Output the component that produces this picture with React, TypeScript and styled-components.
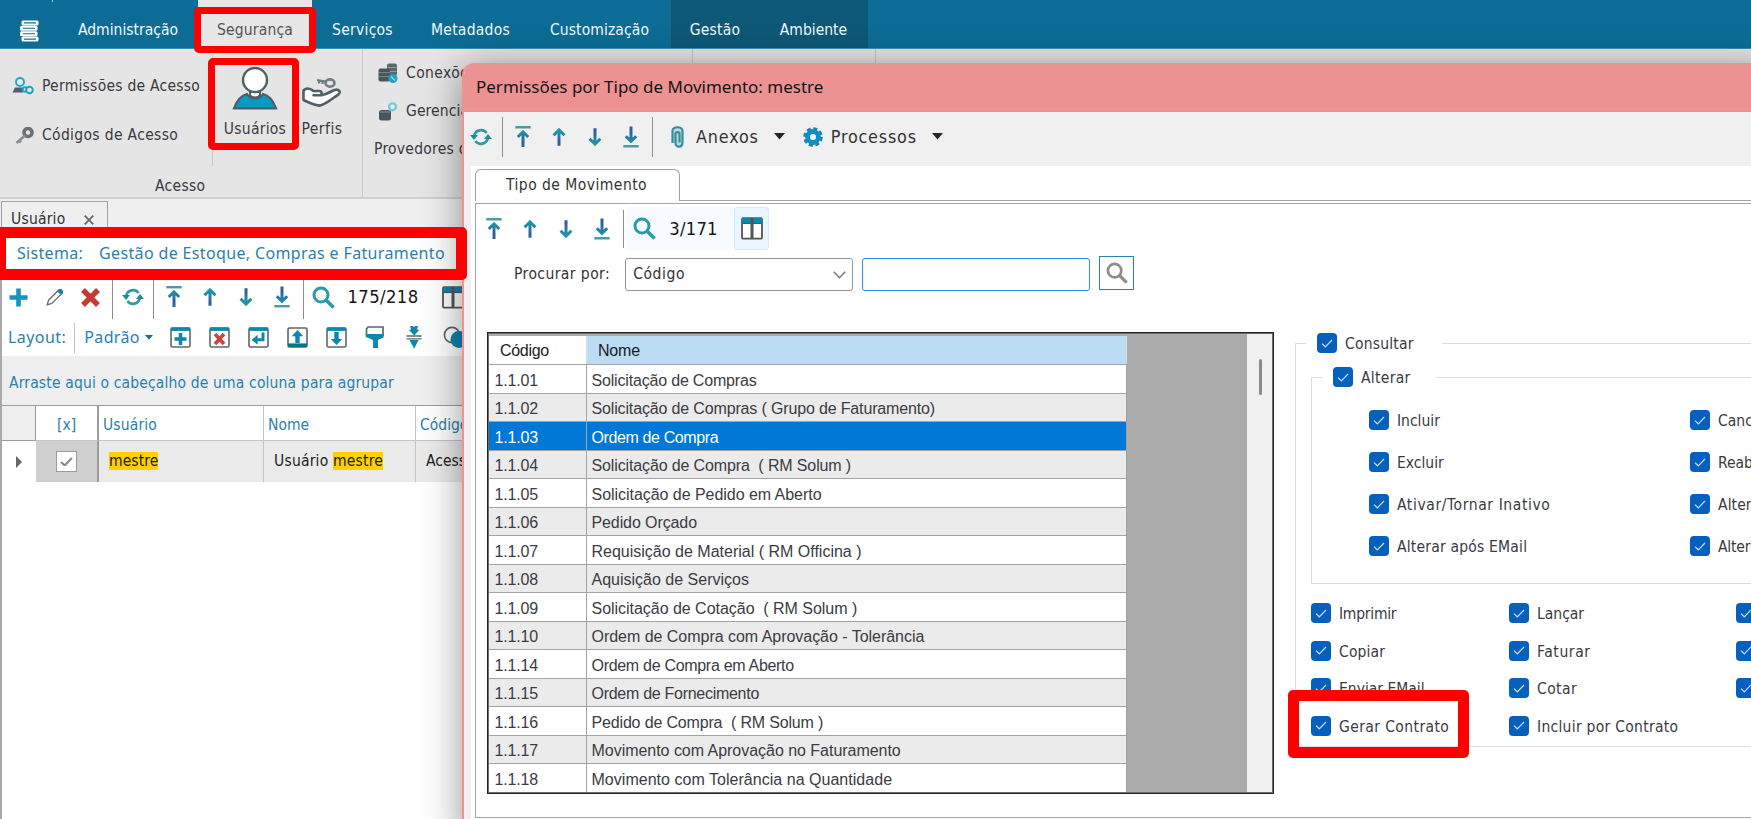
import React from 'react';
import styled, { createGlobalStyle, css } from 'styled-components';

const ui = '"DejaVu Sans Condensed", "DejaVu Sans", sans-serif';
const humanist = '"Noto Sans", "Open Sans", sans-serif';
const gridFont = '"Liberation Sans", Arial, sans-serif';

const teal = '#1c9aa8';
const navy = '#2f5f9e';
const brand = '#0f86ad';
const slate = '#4f5f66';

const Global = createGlobalStyle`
  * { box-sizing: border-box; }
  html, body { margin: 0; padding: 0; overflow: hidden; background: #fff; }
  body { font-family: ${ui}; font-size: 15.5px; color: #333; }
  svg { display: block; flex: none; }
`;

const Screen = styled.div`
  position: relative;
  width: 1751px;
  height: 819px;
  overflow: hidden;
  background: #fff;
`;

const Text = styled.span<{ $ls?: number; $size?: number; $color?: string; $font?: string }>`
  white-space: pre;
  flex: none;
  line-height: 1.2;
  letter-spacing: ${(p) => p.$ls ?? 0}px;
  ${(p) => p.$size && css`font-size: ${p.$size}px;`}
  ${(p) => p.$color && css`color: ${p.$color};`}
  ${(p) => p.$font && css`font-family: ${p.$font};`}
`;

/* ---------- menu bar ---------- */

const MenuBar = styled.nav`
  display: flex;
  height: 49px;
  background: #0c6c95;
  border-bottom: 1px solid #3d8fb3;
  color: #f2f7f9;
`;
const AppButton = styled.div`
  width: 58px;
  padding-left: 20px;
`;
const TopMark = styled.div`
  width: 1px;
  height: 2px;
  margin: 0 0 18px 32px;
  background: #a9cbdb;
`;
const MenuItem = styled.div<{ $w: number; $active?: boolean; $dark?: boolean }>`
  display: flex;
  flex: none;
  justify-content: center;
  align-items: center;
  width: ${(p) => p.$w}px;
  padding-top: 12px;
  background: ${(p) => (p.$active ? '#e6e6e6' : p.$dark ? '#0d5877' : 'transparent')};
  color: ${(p) => (p.$active ? '#555' : 'inherit')};
`;

/* ---------- ribbon ---------- */

const Ribbon = styled.section`
  display: flex;
  height: 150px;
  background: #e5e5e5;
  border-bottom: 2px solid #cfcfcf;
  color: #3a3a42;
`;
const RibbonGroup = styled.div<{ $w: number }>`
  flex: none;
  width: ${(p) => p.$w}px;
  border-right: 1px solid #c8c8c8;
`;
const RibbonBody = styled.div`
  display: flex;
  height: 117px;
`;
const RibbonCaption = styled.div`
  display: flex;
  align-items: center;
  height: 40px;
  padding-left: 155px;
`;
const RibbonList = styled.div`
  width: 212px;
  height: 117px;
  padding-top: 12px;
`;
const RibbonLink = styled.div<{ $h: number; $pl: number; $gap: number }>`
  display: flex;
  align-items: center;
  height: ${(p) => p.$h}px;
  padding-left: ${(p) => p.$pl}px;
  gap: ${(p) => p.$gap}px;
`;
const RibbonDivider = styled.div`
  width: 1px;
  height: 111px;
  margin-top: 6px;
  background: #c8c8c8;
`;
const BigButton = styled.div<{ $w: number; $ml: number }>`
  display: flex;
  flex-direction: column;
  align-items: center;
  width: ${(p) => p.$w}px;
  margin-left: ${(p) => p.$ml}px;
  padding-top: 17px;
  svg { margin-bottom: 10px; }
`;

/* ---------- document area ---------- */

const TabStrip = styled.div`
  height: 32px;
  padding: 2px 0 0 1px;
  background: #efefef;
`;
const DocTab = styled.div`
  display: flex;
  align-items: center;
  width: 107px;
  height: 36px;
  padding-left: 9px;
  gap: 19px;
  border: 1px solid #a0a0a0;
  border-bottom: 0;
`;
const Document = styled.main`
  width: 620px;
  height: 588px;
  background: #fff;
  border-left: 2px solid #a9a9a9;
`;
const SystemBar = styled.div`
  display: flex;
  align-items: center;
  height: 44px;
  padding: 2px 0 0 15px;
  gap: 16px;
  color: #2a7fae;
`;
const Tools = styled.div<{ $h: number; $pl?: number }>`
  display: flex;
  align-items: center;
  height: ${(p) => p.$h}px;
  padding-left: ${(p) => p.$pl ?? 0}px;
`;
const Tool = styled.div<{ $w: number; $bg?: string; $line?: string }>`
  display: flex;
  flex: none;
  justify-content: center;
  align-items: center;
  width: ${(p) => p.$w}px;
  ${(p) => p.$bg && css`align-self: stretch; border-radius: 3px; background: ${p.$bg};`}
  ${(p) => p.$line && css`border: 1px solid ${p.$line};`}
`;
const Separator = styled.div<{ $h: number; $color?: string }>`
  flex: none;
  width: 1px;
  height: ${(p) => p.$h}px;
  background: ${(p) => p.$color ?? '#8d8d8d'};
`;
const GroupPanel = styled.div`
  display: flex;
  align-items: center;
  height: 49px;
  padding: 5px 0 0 7px;
  background: #efefef;
  color: #2a7fae;
`;
const UserGrid = styled.div`
  display: grid;
  grid-template-columns: 34px 63px 165px 152px 1fr;
  grid-template-rows: 35px 41px;
  border-top: 1px solid #9c9c9c;
`;
const UserHead = styled.div<{ $bg?: string; $pl?: number }>`
  display: flex;
  align-items: center;
  padding: 4px 0 0 ${(p) => p.$pl ?? 4}px;
  color: #2a7fae;
  background: ${(p) => p.$bg ?? '#fff'};
  border-right: 1px solid #c4c4c4;
  border-bottom: 1px solid #c4c4c4;
  &:nth-child(1) { border-color: #9c9c9c; }
  &:nth-child(2) { border-right: 2px solid #9c9c9c; }
`;
const UserCell = styled.div<{ $bg?: string; $pl?: number }>`
  display: flex;
  align-items: center;
  padding-left: ${(p) => p.$pl ?? 10}px;
  color: #1d1d24;
  background: ${(p) => p.$bg ?? '#eaeaea'};
  border-right: 1px solid #c4c4c4;
  &:nth-child(6) { border-right: 0; }
  &:nth-child(7) { border-right: 2px solid #9c9c9c; }
`;
const Mark = styled.mark`
  background: #ffd000;
  color: inherit;
`;
const GrayCheck = styled.div`
  display: flex;
  align-items: center;
  justify-content: center;
  width: 21px;
  height: 21px;
  border: 1.5px solid #9a9a9a;
  background: #fff;
`;

/* ---------- dialog ---------- */

const Dialog = styled.section`
  position: absolute;
  left: 462px;
  top: 63px;
  width: 1310px;
  height: 780px;
  overflow: hidden;
  background: #f0f0f0;
  border: 2px solid #ee9393;
  border-radius: 12px 0 0 0;
  box-shadow: 0 6px 38px rgba(0, 0, 0, 0.42);
  border-top: 0;
`;
const TitleBar = styled.header`
  display: flex;
  align-items: center;
  height: 49px;
  padding: 1px 0 0 12px;
  background: #ec9292;
  border-bottom: 1px solid #c0a0a0;
  color: #141414;
`;
const Pages = styled.div`
  height: 654px;
  margin-left: 7px;
  padding: 3px 0 0 4px;
  background: #fff;
`;
const PageTabs = styled.div`
  display: flex;
  align-items: flex-end;
  height: 32px;
`;
const PageTab = styled.div`
  display: flex;
  align-items: center;
  width: 205px;
  height: 32px;
  padding-left: 30px;
  border: 1px solid #9f9f9f;
  border-bottom: 0;
  border-radius: 6px 6px 0 0;
`;
const PageTabsRest = styled.div`
  flex: 1;
  height: 1px;
  background: #a5a5a5;
`;
const Page = styled.div`
  height: 615px;
  margin-top: 2px;
  border: solid #a5a5a5;
  border-width: 1px 0 1px 1px;
`;
const SearchRow = styled.div`
  display: flex;
  align-items: center;
  height: 49px;
  padding-left: 38px;
`;
const Select = styled.div`
  display: flex;
  align-items: center;
  justify-content: space-between;
  width: 228px;
  height: 33px;
  margin-left: 15px;
  padding: 0 6px 0 7px;
  border: 1px solid #949494;
  border-radius: 3px;
  background: #fff;
`;
const Field = styled.input`
  width: 228px;
  height: 33px;
  margin-left: 9px;
  border: 1.5px solid #2f8fdc;
  border-radius: 3px;
  outline: 0;
  background: #fff;
`;
const SearchButton = styled.div`
  display: flex;
  align-items: center;
  justify-content: center;
  width: 35px;
  height: 34px;
  margin: -4px 0 0 9px;
  border: 1.5px solid #2b84aa;
`;
const Split = styled.div`
  display: flex;
  align-items: flex-start;
  padding: 33px 0 0 11px;
`;
const GridFrame = styled.div`
  display: flex;
  flex: none;
  width: 787px;
  height: 462px;
  padding: 1px 0 0 1px;
  border: 1px solid #222;
  outline: 1px solid #6c6c6c;
  outline-offset: -2px;
  background: #ababab;
  font-family: ${gridFont};
  font-size: 16px;
`;
const Table = styled.div`
  width: 638px;
  padding-top: 2px;
`;
const TableHead = styled.div`
  display: grid;
  grid-template-columns: 98px 1fr;
  height: 29px;
  border-bottom: 1px solid #a3a3a3;
  color: #1a1a22;
`;
const HeadCell = styled.div<{ $selected?: boolean }>`
  display: flex;
  align-items: center;
  padding: 1px 0 0 11px;
  background: ${(p) => (p.$selected ? '#bbdcf3' : '#fff')};
  border-right: 1px solid #dcdcdc;
`;
const TableRow = styled.div<{ $alt: boolean; $selected: boolean }>`
  display: grid;
  grid-template-columns: 98px 1fr;
  height: 28.5px;
  color: ${(p) => (p.$selected ? '#fff' : '#3b3b44')};
  background: ${(p) => (p.$selected ? '#0078d7' : p.$alt ? '#ebebeb' : '#fff')};
  border-bottom: 1px solid #a3a3a3;
`;
const Cell = styled.div<{ $pl: number }>`
  display: flex;
  align-items: center;
  padding: 3px 0 0 ${(p) => p.$pl}px;
  border-right: 1px solid #a3a3a3;
`;
const ScrollTrack = styled.div`
  width: 26px;
  height: 459px;
  margin-left: auto;
  padding: 25px 0 0 12px;
  background: #f0f0f0;
`;
const ScrollThumb = styled.div`
  width: 3px;
  height: 36px;
  border-radius: 2px;
  background: #8b8b8b;
`;

/* ---------- permissions ---------- */

const PermissionGroup = styled.fieldset<{ $outer?: boolean }>`
  flex: none;
  width: 700px;
  height: ${(p) => (p.$outer ? 414 : 217)}px;
  margin: ${(p) => (p.$outer ? '1px 0 0 21px' : '14px 0 0 15px')};
  padding: 0;
  min-width: 0;
  border: 1.5px solid #dedede;
`;
const Legend = styled.legend<{ $w: number }>`
  display: flex;
  width: ${(p) => p.$w}px;
  margin-left: 10px;
  padding: 0 0 0 11px;
`;
const CheckGrid = styled.div<{ $cols: string; $row: number; $pad: string }>`
  display: grid;
  grid-template-columns: ${(p) => p.$cols};
  grid-auto-rows: ${(p) => p.$row}px;
  padding: ${(p) => p.$pad};
`;
const CheckLabel = styled.div`
  display: flex;
  align-items: flex-start;
  gap: 8px;
  height: 20px;
  color: #3a3a42;
  span { line-height: 22px; }
`;
const CheckBox = styled.div`
  flex: none;
  display: flex;
  align-items: center;
  justify-content: center;
  width: 20px;
  height: 20px;
  border-radius: 4px;
  background: #0560bd;
`;

/* ---------- highlight frames ---------- */

const Highlight = styled.div<{ $x: number; $y: number; $w: number; $h: number; $b: number }>`
  position: absolute;
  left: ${(p) => p.$x}px;
  top: ${(p) => p.$y}px;
  width: ${(p) => p.$w}px;
  height: ${(p) => p.$h}px;
  border: ${(p) => p.$b}px solid #ff0000;
  border-radius: 5px;
`;

/* ---------- icons ---------- */

const Defs = styled.svg`
  position: absolute;
  width: 0;
  height: 0;
`;

const Gradients = () => (
  <Defs>
    <defs>
      <linearGradient id="rise" gradientUnits="userSpaceOnUse" x1="0" y1="3" x2="0" y2="21">
        <stop offset="0.1" stopColor={teal} />
        <stop offset="0.8" stopColor={navy} />
      </linearGradient>
      <linearGradient id="fall" gradientUnits="userSpaceOnUse" x1="0" y1="21" x2="0" y2="3">
        <stop offset="0.1" stopColor={teal} />
        <stop offset="0.8" stopColor={navy} />
      </linearGradient>
    </defs>
  </Defs>
);

const ArrowUp = () => (
  <svg width="24" height="24" viewBox="0 0 24 24" fill="none" stroke="url(#rise)" strokeWidth="3">
    <path d="M12 20.8V5M6.6 10.2L12 4.800l5.400 5.400" />
  </svg>
);
const ArrowDown = () => (
  <svg width="24" height="24" viewBox="0 0 24 24" fill="none" stroke="url(#fall)" strokeWidth="3">
    <path d="M12 3.200V19M6.600 13.800l5.400 5.400 5.400-5.400" />
  </svg>
);
const ArrowTop = () => (
  <svg width="24" height="24" viewBox="0 0 24 24" fill="none">
    <path d="M4.300 2.200h15.400" stroke="#4c9aa4" strokeWidth="2.400" />
    <path d="M12 22V8M6.800 12L12 6.800 17.200 12" stroke="url(#rise)" strokeWidth="3" />
  </svg>
);
const ArrowBottom = () => (
  <svg width="24" height="24" viewBox="0 0 24 24" fill="none">
    <path d="M4.300 21.200h15.400" stroke="#4c9aa4" strokeWidth="2.400" />
    <path d="M12 1.500V15M6.800 11.200L12 16.400l5.200-5.200" stroke="url(#fall)" strokeWidth="3" />
  </svg>
);
const Refresh = () => (
  <svg width="22" height="20" viewBox="0 0 22 20" fill="none">
    <path d="M4.200 8.600A7 7 0 0 1 16.600 6" stroke="#2f9aa5" strokeWidth="2.600" />
    <path d="M17.800 11.400A7 7 0 0 1 5.400 14" stroke="#2f9aa5" strokeWidth="2.600" />
    <path d="M0 8h8l-4 5z" fill="#1f8f96" />
    <path d="M22 12h-8l4-5z" fill="#1f8f96" />
  </svg>
);
const Magnifier = ({ size = 23, color = '#2a9aa8', width = 3 }) => (
  <svg width={size} height={size} viewBox="0 0 23 23" fill="none" stroke={color} strokeWidth={width}>
    <circle cx="9" cy="9" r="7" />
    <path d="M14 14l7.600 7.600" strokeWidth={width + 0.6} />
  </svg>
);
const Columns = () => (
  <svg width="22" height="23" viewBox="0 0 22 23">
    <rect x="1" y="1.200" width="20" height="20.400" rx="1" fill="#fff" stroke="#555" strokeWidth="1.800" />
    <rect x="1" y="1" width="20" height="5" fill="#0b86b5" />
    <path d="M11 1v21" stroke="#555" strokeWidth="3" />
    <path d="M1 6.500h20" stroke="#555" strokeWidth="1.200" />
  </svg>
);
const Plus = () => (
  <svg width="19" height="19" viewBox="0 0 19 19">
    <path d="M9.500 0.500v18M0.500 9.500h18" stroke="#1593c0" strokeWidth="4.600" />
  </svg>
);
const Pencil = () => (
  <svg width="18" height="18" viewBox="0 0 18 18">
    <path d="M1.200 16.800L2.600 12.200 12.400 2.200c1.600-1.600 5 1.600 3.400 3.400L5.800 15.400z" fill="#fff" stroke="#6a6a6a" strokeWidth="1.300" />
    <path d="M11.200 3.400L13.200 1.400c1.800-1.200 4.600 1.400 3.600 3.400l-2 2z" fill="#1d7fae" />
  </svg>
);
const Cross = ({ size = 19, color = '#c63a32', width = 5.4 }) => (
  <svg width={size} height={size} viewBox="0 0 19 19">
    <path d="M2 2l15 15M17 2L2 17" stroke={color} strokeWidth={width} />
  </svg>
);
const Caret = ({ w = 11, color = '#262626' }) => (
  <svg width={w} height={w * 0.6} viewBox="0 0 12 7">
    <path d="M0 0h12L6 7z" fill={color} />
  </svg>
);

const BoxIcon = ({ children }: { children: React.ReactNode }) => (
  <svg width="21" height="21" viewBox="0 0 21 21" fill="none">
    <rect x="1" y="1" width="19" height="19" rx="1.500" fill="#fff" stroke="#5a686c" strokeWidth="1.600" />
    <path d="M1 2.200h19" stroke={brand} strokeWidth="3.400" />
    {children}
  </svg>
);
const LayoutAdd = () => (
  <BoxIcon><path d="M10.500 6v12M4.500 12h12" stroke={brand} strokeWidth="3.600" /></BoxIcon>
);
const LayoutDelete = () => (
  <BoxIcon><path d="M6 7l9 10M15 7L6 17" stroke="#c8453e" strokeWidth="3.600" /></BoxIcon>
);
const LayoutEnter = () => (
  <BoxIcon>
    <path d="M15 5.500v7.300H8" stroke={brand} strokeWidth="3" />
    <path d="M9.600 7.800v10L3.600 12.800z" fill={brand} />
  </BoxIcon>
);
const LayoutExport = () => (
  <svg width="21" height="21" viewBox="0 0 21 21" fill="none">
    <rect x="1" y="1" width="19" height="19" rx="1.500" fill="#fff" stroke="#5a686c" strokeWidth="1.600" />
    <path d="M1 18.200h19" stroke="#0d6f92" strokeWidth="3.600" />
    <path d="M10.500 3l5.800 6.200h-3.600V16H8.300V9.200H4.700z" fill={brand} />
  </svg>
);
const LayoutImport = () => (
  <BoxIcon><path d="M10.500 18l5.800-6h-3.600V5H8.300v7H4.700z" fill={brand} /></BoxIcon>
);
const Brush = () => (
  <svg width="20" height="23" viewBox="0 0 20 23">
    <path d="M3 1h15v8H1.500V3z" fill="#fff" stroke="#5a686c" strokeWidth="1.700" />
    <path d="M0.800 8h17.800v3.500l-5.600 2.500v8H8v-8l-7.200-3z" fill={brand} />
  </svg>
);
const Compact = () => (
  <svg width="16" height="23" viewBox="0 0 16 23">
    <path d="M4 0h3l1 1.200L9 0h3l-1 3.400 2.200.6L8.200 9.400 3 4l2.200-.6z" fill={brand} />
    <path d="M0.500 10h15M0.500 12.800h15" stroke="#5a686c" strokeWidth="1.300" />
    <path d="M3.500 14h9L8.200 22.800z" fill={brand} />
  </svg>
);
const Filter = () => (
  <svg width="27" height="23" viewBox="0 0 27 23">
    <circle cx="9" cy="9" r="7.600" fill="#fff" stroke="#5a686c" strokeWidth="1.600" />
    <circle cx="16" cy="13.500" r="8.500" fill={brand} />
  </svg>
);

const AppLogo = () => (
  <svg width="20" height="22" viewBox="0 0 20 22">
    <g fill="#fff">
      <rect x="1.500" y="0.400" width="17" height="5" rx="1.500" />
      <rect x="0" y="5.800" width="17.500" height="5" rx="1.500" />
      <rect x="0" y="11.200" width="17.500" height="5" rx="1.500" />
      <rect x="1.500" y="16.600" width="17" height="5" rx="1.500" />
    </g>
    <path d="M4 2.900h12M3 8.300h12M3 13.700h12M4 19.100h12" stroke="#0c6c95" strokeWidth="1.100" />
  </svg>
);
const UserLink = () => (
  <svg width="22" height="18" viewBox="0 0 22 18" fill="none">
    <path d="M0.500 15.500L3 10.500h8v5z" fill={slate} />
    <circle cx="8" cy="5" r="4" fill="#e5f6fa" stroke="#1fa3cc" strokeWidth="2" />
    <circle cx="13" cy="12.500" r="2.200" fill="#e5e5e5" stroke="#1fa3cc" strokeWidth="2" />
    <circle cx="17.500" cy="13" r="3.300" fill="#e5e5e5" stroke="#1fa3cc" strokeWidth="2" />
  </svg>
);
const Key = () => (
  <svg width="19" height="18" viewBox="0 0 19 18" fill="none">
    <circle cx="13" cy="5.500" r="4" stroke="#697176" strokeWidth="3.600" />
    <path d="M10 8.500L1.500 16M4 13.500L6 15.500" stroke="#8a9195" strokeWidth="2.800" />
  </svg>
);
const UserBig = () => (
  <svg width="46" height="44" viewBox="0 0 46 44">
    <path d="M2 42.300C5 34 8.500 29.500 15 28c3.500 6 12.500 6 16 0 6.500 1.500 10 6 13 14.300z" fill="#0b98c2" stroke={slate} strokeWidth="2.200" />
    <path d="M18 26v3.500c2.500 2.500 7.500 2.500 10 0V26z" fill="#fff" stroke={slate} strokeWidth="2" />
    <circle cx="23" cy="14" r="12" fill="#fff" stroke={slate} strokeWidth="2.400" />
  </svg>
);
const HandKey = () => (
  <svg width="40" height="44" viewBox="0 0 40 44" fill="none" stroke={slate} strokeWidth="2.600" strokeLinejoin="round">
    <ellipse cx="28" cy="17" rx="4.500" ry="3.600" stroke="#707b80" strokeWidth="2.600" />
    <path d="M24 15.500l-9-1.500M17 14.500v3M20.500 15v3" stroke="#707b80" strokeWidth="2.200" />
    <path d="M1.500 24.500c3-3 7-2 10 .5h6c3 .5 2.800 4 0 4.300h-6 8c5-1 9-3.500 13-5.300 4-1.500 7 1.800 4 4.300-6 4-12 10-19 11.300C11 39 6 36 1.500 34z" fill="#fff" />
  </svg>
);
const Servers = () => (
  <svg width="20" height="21" viewBox="0 0 20 21">
    <rect x="9" y="0.500" width="10" height="12" rx="2" fill="#58676e" />
    <path d="M9.500 4.500h9M9.500 8.500h9" stroke="#aab4b8" strokeWidth="0.700" />
    <rect x="0.500" y="5.500" width="11.500" height="13" rx="2" fill="#46565d" />
    <path d="M1 9.500h11M1 13.500h11" stroke="#8c989d" strokeWidth="0.700" />
    <circle cx="15" cy="15.500" r="4.500" fill="#1ea2c6" />
    <path d="M13 13.500l4 4" stroke="#8fd6e8" strokeWidth="1.400" />
  </svg>
);
const ServerGear = () => (
  <svg width="20" height="20" viewBox="0 0 20 20">
    <rect x="1" y="8" width="12" height="10.500" rx="2.500" fill="#46565d" />
    <path d="M2 10h10" stroke="#87949a" strokeWidth="1" />
    <circle cx="14.500" cy="4.800" r="3.400" fill="#dff2f7" stroke="#7cc6dc" strokeWidth="2.400" />
  </svg>
);
const Clip = () => (
  <svg width="13" height="22" viewBox="0 0 13 22" fill="none">
    <path d="M1.500 17V5C1.500 0 11.500 0 11.500 5v11.500c0 5.500-7 5.500-7 0.500V8c0-2.600 4-2.600 4 0v8.500" fill="#b9dbe0" stroke="#388b9b" strokeWidth="2.200" />
  </svg>
);
const Gear = () => (
  <svg width="20" height="20" viewBox="0 0 20 20">
    <circle cx="10" cy="10" r="8" fill="none" stroke="#2b7fa6" strokeWidth="3.600" strokeDasharray="3.900 2.383" />
    <circle cx="10" cy="10" r="5.400" fill="#fff" stroke="#0b8fc6" strokeWidth="5" />
    <circle cx="10" cy="10" r="2.600" fill="#eef5f8" />
  </svg>
);
const CloseX = () => (
  <svg width="10" height="10" viewBox="0 0 10 10">
    <path d="M0.700 0.700l8.600 8.600M9.300 0.700L0.700 9.300" stroke="#666" strokeWidth="1.700" />
  </svg>
);
const Chevron = () => (
  <svg width="13" height="8" viewBox="0 0 13 8">
    <path d="M0.800 0.800l5.700 5.900 5.700-5.900" fill="none" stroke="#777" strokeWidth="1.500" />
  </svg>
);
const Tick = ({ color, w = 12, sw = 1.2 }: { color: string; w?: number; sw?: number }) => (
  <svg width={w} height={w * 0.75} viewBox="0 0 12 9">
    <path d="M1 4.600l3.300 3.200L11 1" fill="none" stroke={color} strokeWidth={sw} />
  </svg>
);

/* ---------- composed parts ---------- */

const Check = ({ label, ls }: { label?: string; ls?: number }) => (
  <CheckLabel>
    <CheckBox><Tick color="#c9def3" /></CheckBox>
    {label && <Text $ls={ls}>{label}</Text>}
  </CheckLabel>
);

const Navigation = ({ w = 36 }: { w?: number }) => (
  <>
    <Tool $w={w}><ArrowTop /></Tool>
    <Tool $w={w}><ArrowUp /></Tool>
    <Tool $w={w}><ArrowDown /></Tool>
    <Tool $w={w}><ArrowBottom /></Tool>
  </>
);

const movements: [string, string, number][] = [
  ['1.1.01', 'Solicitação de Compras', -0.18],
  ['1.1.02', 'Solicitação de Compras ( Grupo de Faturamento)', -0.15],
  ['1.1.03', 'Ordem de Compra', -0.38],
  ['1.1.04', 'Solicitação de Compra  ( RM Solum )', -0.13],
  ['1.1.05', 'Solicitação de Pedido em Aberto', -0.04],
  ['1.1.06', 'Pedido Orçado', -0.1],
  ['1.1.07', 'Requisição de Material ( RM Officina )', 0],
  ['1.1.08', 'Aquisição de Serviços', 0],
  ['1.1.09', 'Solicitação de Cotação  ( RM Solum )', -0.03],
  ['1.1.10', 'Ordem de Compra com Aprovação - Tolerância', -0.03],
  ['1.1.14', 'Ordem de Compra em Aberto', -0.3],
  ['1.1.15', 'Ordem de Fornecimento', -0.28],
  ['1.1.16', 'Pedido de Compra  ( RM Solum )', -0.16],
  ['1.1.17', 'Movimento com Aprovação no Faturamento', -0.03],
  ['1.1.18', 'Movimento com Tolerância na Quantidade', 0.03],
];

const MainWindow = () => (
  <>
    <MenuBar>
      <AppButton><TopMark /><AppLogo /></AppButton>
      <MenuItem $w={140}><Text>Administração</Text></MenuItem>
      <MenuItem $w={114} $active><Text $ls={0.15}>Segurança</Text></MenuItem>
      <MenuItem $w={101}><Text $ls={0.25}>Serviços</Text></MenuItem>
      <MenuItem $w={115}><Text $ls={0.25}>Metadados</Text></MenuItem>
      <MenuItem $w={143}><Text $ls={0.1}>Customização</Text></MenuItem>
      <MenuItem $w={88} $dark><Text $ls={0.25}>Gestão</Text></MenuItem>
      <MenuItem $w={109} $dark><Text>Ambiente</Text></MenuItem>
    </MenuBar>

    <Ribbon>
      <RibbonGroup $w={363}>
        <RibbonBody>
          <RibbonList>
            <RibbonLink $h={50} $pl={12} $gap={8}><UserLink /><Text $ls={0.25}>Permissões de Acesso</Text></RibbonLink>
            <RibbonLink $h={49} $pl={15} $gap={8}><Key /><Text $ls={0.33}>Códigos de Acesso</Text></RibbonLink>
          </RibbonList>
          <RibbonDivider />
          <BigButton $w={76} $ml={4}><UserBig /><Text $ls={0.25}>Usuários</Text></BigButton>
          <BigButton $w={60} $ml={-1}><HandKey /><Text $ls={0.5}>Perfis</Text></BigButton>
        </RibbonBody>
        <RibbonCaption><Text $ls={0.3}>Acesso</Text></RibbonCaption>
      </RibbonGroup>
      <RibbonGroup $w={330}>
        <RibbonLink $h={49} $pl={15} $gap={8}><Servers /><Text $ls={0.4}>Conexões</Text></RibbonLink>
        <RibbonLink $h={27} $pl={15} $gap={8}><ServerGear /><Text $ls={0.1}>Gerenciar</Text></RibbonLink>
        <RibbonLink $h={48} $pl={11} $gap={0}><Text $ls={0.25}>Provedores de</Text></RibbonLink>
      </RibbonGroup>
      <RibbonGroup $w={183} />
    </Ribbon>

    <TabStrip>
      <DocTab><Text $ls={0.2}>Usuário</Text><CloseX /></DocTab>
    </TabStrip>

    <Document>
      <SystemBar>
        <Text $font={humanist} $size={16} $ls={0.3}>Sistema:</Text>
        <Text $font={humanist} $size={16} $ls={0.36}>Gestão de Estoque, Compras e Faturamento</Text>
      </SystemBar>
      <Tools $h={44}>
        <Tool $w={33}><Plus /></Tool>
        <Tool $w={40}><Pencil /></Tool>
        <Tool $w={30}><Cross /></Tool>
        <Tool $w={7} />
        <Separator $h={44} />
        <Tool $w={40}><Refresh /></Tool>
        <Separator $h={44} />
        <Tool $w={2} />
        <Navigation />
        <Tool $w={3} />
        <Separator $h={44} />
        <Tool $w={39}><Magnifier /></Tool>
        <Tool $w={80}><Text $size={18.3} $color="#1a1212" $ls={0.4}>175/218</Text></Tool>
        <Tool $w={11} />
        <Tool $w={38}><Columns /></Tool>
      </Tools>
      <Tools $h={37} $pl={6}>
        <Text $font={humanist} $size={16} $color="#2a7fae" $ls={0.45}>Layout:</Text>
        <Tool $w={8} />
        <Separator $h={30} $color="#c0c0c0" />
        <Tool $w={9} />
        <Text $font={humanist} $size={16} $color="#2a7fae" $ls={0.35}>Padrão</Text>
        <Tool $w={19}><Caret w={8} color="#1a6d96" /></Tool>
        <Tool $w={2} />
        <Tool $w={39}><LayoutAdd /></Tool>
        <Tool $w={39}><LayoutDelete /></Tool>
        <Tool $w={39}><LayoutEnter /></Tool>
        <Tool $w={39}><LayoutExport /></Tool>
        <Tool $w={39}><LayoutImport /></Tool>
        <Tool $w={39}><Brush /></Tool>
        <Tool $w={39}><Compact /></Tool>
        <Tool $w={45}><Filter /></Tool>
      </Tools>
      <GroupPanel><Text $ls={0.15}>Arraste aqui o cabeçalho de uma coluna para agrupar</Text></GroupPanel>
      <UserGrid>
        <UserHead $bg="#efefef" />
        <UserHead $pl={21}><Text>[x]</Text></UserHead>
        <UserHead><Text $ls={0.15}>Usuário</Text></UserHead>
        <UserHead><Text>Nome</Text></UserHead>
        <UserHead><Text>Código</Text></UserHead>
        <UserCell $bg="#fff" $pl={14}>
          <svg width="6" height="12" viewBox="0 0 6 12"><path d="M0 0l6 6-6 6z" fill="#666" /></svg>
        </UserCell>
        <UserCell $bg="#cfcfcf" $pl={20}><GrayCheck><Tick color="#888" w={13} sw={2} /></GrayCheck></UserCell>
        <UserCell><Text $ls={0.1}><Mark>mestre</Mark></Text></UserCell>
        <UserCell><Text $ls={0.2}>Usuário <Mark>mestre</Mark></Text></UserCell>
        <UserCell><Text>Acesso</Text></UserCell>
      </UserGrid>
    </Document>
  </>
);

const PermissionsDialog = () => (
  <Dialog>
    <TitleBar>
      <Text $font={humanist} $size={17}>Permissões por Tipo de Movimento: mestre</Text>
    </TitleBar>
    <Tools $h={49} $pl={-1}>
      <Tool $w={34}><Refresh /></Tool>
      <Tool $w={4} />
      <Separator $h={40} />
      <Tool $w={2} />
      <Navigation />
      <Tool $w={3} />
      <Separator $h={40} />
      <Tool $w={13} />
      <Tool $w={22}><Clip /></Tool>
      <Tool $w={8} />
      <Text $size={17.8} $ls={0.85}>Anexos</Text>
      <Tool $w={41}><Caret /></Tool>
      <Tool $w={26}><Gear /></Tool>
      <Tool $w={5} />
      <Text $size={17.8} $ls={0.82}>Processos</Text>
      <Tool $w={42}><Caret /></Tool>
    </Tools>
    <Tools $h={5} />
    <Pages>
      <PageTabs>
        <PageTab><Text $ls={0.46}>Tipo de Movimento</Text></PageTab>
        <PageTabsRest />
      </PageTabs>
      <Page>
        <Tools $h={3} />
        <Tools $h={43}>
          <Navigation />
          <Tool $w={3} />
          <Separator $h={38} />
          <Tool $w={3} />
          <Tool $w={35} $bg="#f7fbff"><Magnifier /></Tool>
          <Tool $w={63} $bg="#f7fbff"><Text $size={18.3} $color="#1a1212" $ls={0.25}>3/171</Text></Tool>
          <Tool $w={8} $bg="#f7fbff" />
          <Tool $w={1} />
          <Tool $w={35} $bg="#eaf5ff" $line="#d3eafb"><Columns /></Tool>
        </Tools>
        <SearchRow>
          <Text $ls={0.43}>Procurar por:</Text>
          <Select><Text $ls={0.6}>Código</Text><Chevron /></Select>
          <Field aria-label="Valor" />
          <SearchButton><Magnifier size={22} color="#8c8c8c" width={2.8} /></SearchButton>
        </SearchRow>
        <Split>
          <GridFrame>
            <Table>
              <TableHead>
                <HeadCell><Text $ls={-0.3}>Código</Text></HeadCell>
                <HeadCell $selected><Text $ls={-0.2}>Nome</Text></HeadCell>
              </TableHead>
              {movements.map(([code, name, spacing], i) => (
                <TableRow key={code} $alt={i % 2 === 1} $selected={code === '1.1.03'}>
                  <Cell $pl={5.5}><Text $ls={-0.15}>{code}</Text></Cell>
                  <Cell $pl={4.5}><Text $ls={spacing}>{name}</Text></Cell>
                </TableRow>
              ))}
            </Table>
            <ScrollTrack><ScrollThumb /></ScrollTrack>
          </GridFrame>
          <PermissionGroup $outer>
            <Legend $w={136}><Check label="Consultar" ls={0.2} /></Legend>
            <PermissionGroup>
              <Legend $w={114}><Check label="Alterar" ls={0.3} /></Legend>
              <CheckGrid $cols="321px 1fr" $row={42} $pad="23px 0 0 57px">
                <Check label="Incluir" /><Check label="Cancelar" />
                <Check label="Excluir" /><Check label="Reabrir" />
                <Check label="Ativar/Tornar Inativo" ls={0.6} /><Check label="Alterar" ls={0.1} />
                <Check label="Alterar após EMail" ls={0.2} /><Check label="Alterar" ls={-0.2} />
              </CheckGrid>
            </PermissionGroup>
            <CheckGrid $cols="198px 227px 1fr" $row={37.5} $pad="19px 0 0 15px">
              <Check label="Imprimir" ls={-0.25} /><Check label="Lançar" /><Check />
              <Check label="Copiar" ls={0.15} /><Check label="Faturar" ls={0.6} /><Check />
              <Check label="Enviar EMail" /><Check label="Cotar" ls={0.4} /><Check />
              <Check label="Gerar Contrato" ls={0.4} /><Check label="Incluir por Contrato" ls={0.28} />
            </CheckGrid>
          </PermissionGroup>
        </Split>
      </Page>
    </Pages>
  </Dialog>
);

export default function App() {
  return (
    <Screen>
      <Global />
      <Gradients />
      <MainWindow />
      <PermissionsDialog />
      <Highlight $x={194} $y={7} $w={122} $h={46} $b={7} />
      <Highlight $x={208} $y={58} $w={91} $h={92} $b={7} />
      <Highlight $x={-5} $y={227} $w={472} $h={53} $b={11} />
      <Highlight $x={1288} $y={690} $w={181} $h={68} $b={11} />
    </Screen>
  );
}
